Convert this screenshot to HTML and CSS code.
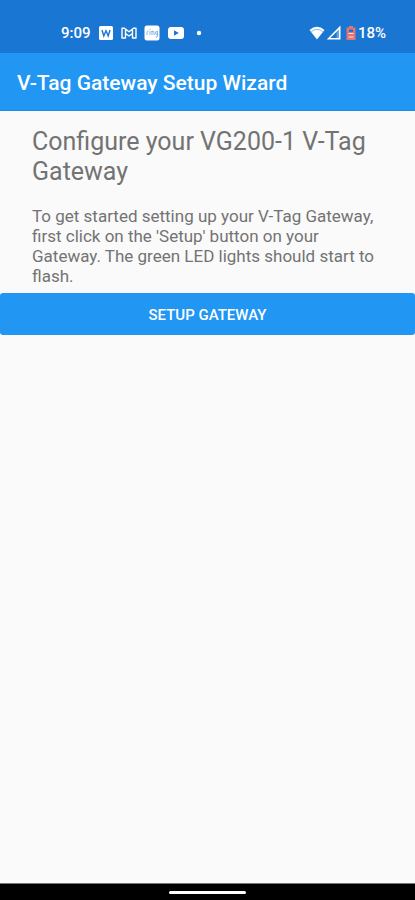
FILE: index.html
```html
<!DOCTYPE html>
<html lang="en">
<head>
<meta charset="utf-8">
<meta name="viewport" content="width=device-width, initial-scale=1">
<title>V-Tag Gateway Setup Wizard</title>
<link rel="stylesheet" href="styles.css">
</head>
<body>
<div class="status">
  <div class="status-group notifications">
    <span class="clock">9:09</span>
    <svg width="16" height="16" viewBox="0 0 16 16" aria-hidden="true"><rect x="1" y="1" width="14" height="14" rx="1.5" fill="#fff"/><path d="M4 5l1.8 6L8 5.8l2.2 5.2L12 5" fill="none" stroke="#1976d2" stroke-width="1.4"/></svg>
    <svg width="16" height="16" viewBox="0 0 16 16" aria-hidden="true"><path d="M1 3.200h2.500L8 6.800l4.500-3.600H15v9.800h-3.500V8.500L8 11 4.500 8.500V13H1zM4.500 4.500v4M11.500 4.500v4" fill="none" stroke="#fff" stroke-width="1.400" stroke-linejoin="round"/></svg>
    <svg width="16" height="16" viewBox="0 0 16 16" aria-hidden="true"><rect x="0.500" y="0.500" width="15" height="15" rx="2.500" fill="#fff"/><path d="M3 10V7q0-1 1.500-1M6 6v4M6 4v1M8 10V6v1q0-1 1-1t1 1v3M13.500 6v5q0 1.500-2 1M13.500 7q-2-1.500-2 1t2 1" fill="none" stroke="#79aee6" stroke-width="0.900"/></svg>
    <svg width="18" height="16" viewBox="0 0 18 16" aria-hidden="true"><rect x="1" y="2" width="16" height="12" rx="3" fill="#fff"/><path d="M7 5.300v5.400L11.800 8z" fill="#1976d2"/></svg>
    <svg class="dot" width="6" height="16" viewBox="0 0 6 16" aria-hidden="true"><circle cx="3" cy="8" r="2.200" fill="#fff"/></svg>
  </div>
  <div class="status-group system">
    <svg width="16" height="16" viewBox="0 0 16 16" aria-hidden="true"><path d="M0.500 5Q8-1.500 15.500 5L8 14.500z" fill="#fff"/><path d="M2.300 6.600Q8 2.300 13.700 6.600" fill="none" stroke="#1976d2" stroke-opacity="0.600" stroke-width="0.800"/></svg>
    <svg width="14" height="16" viewBox="0 0 14 16" aria-hidden="true"><path d="M1.500 13.800L12.700 2.500v11.300z" fill="none" stroke="#fff" stroke-width="1.600"/><path d="M9.500 6l3.200-3.500v11.300H9.500z" fill="#fff" fill-opacity="0.300"/></svg>
    <svg class="battery" width="10" height="16" viewBox="0 0 10 16" aria-hidden="true"><path d="M3 1h4v1.500h2.500V15h-9V2.500H3z" fill="#e57373"/><path d="M3 4.500h4V7H3z" fill="#1976d2"/><path d="M2.500 8.500h5M2.500 12h5" stroke="#fff" stroke-opacity="0.800" stroke-width="1.200"/></svg>
    <span class="percent">18%</span>
  </div>
</div>
<header class="appbar"><h1>V-Tag Gateway Setup Wizard</h1></header>
<main>
  <section class="intro">
    <h2>Configure your VG200-1 V-Tag Gateway</h2>
    <p>To get started setting up your V-Tag Gateway, first click on the 'Setup' button on your Gateway. The green LED lights should start to flash.</p>
  </section>
  <button class="setup" type="button">SETUP GATEWAY</button>
</main>
<footer class="navbar"><div class="handle"></div></footer>
</body>
</html>
```
FILE: styles.css
```css
* {
  box-sizing: border-box;
}

body {
  margin: 0;
  min-height: 100vh;
  display: flex;
  flex-direction: column;
  background: #fafafa;
  color: #737373;
  font-family: Roboto, sans-serif;
}

h1, h2, p {
  margin: 0;
}

.status {
  display: flex;
  justify-content: space-between;
  padding: 25px 29px 12px 61px;
  background: #1976d2;
  color: #fff;
  font-size: 15px;
  font-weight: 500;
  line-height: 16px;
}

.status-group {
  display: flex;
  align-items: center;
}

.notifications {
  gap: 7px;
}

.dot {
  margin-left: 4px;
}

.system {
  gap: 2px;
}

.battery {
  margin-left: 3px;
}

.appbar {
  padding: 18px 17px 14px;
  background: #2196f3;
  border-bottom: 1px solid #1c8ce6;
  color: #fff;
}

.appbar h1 {
  font-size: 21px;
  font-weight: 500;
  line-height: 25px;
}

main {
  flex: 1;
}

.intro {
  padding: 16px 32px 7px;
}

.intro h2 {
  font-size: 25px;
  font-weight: 400;
  line-height: 30px;
}

.intro p {
  margin-top: 19px;
  font-size: 17px;
  line-height: 20px;
}

.setup {
  display: block;
  width: 100%;
  padding: 12px 16px 10px;
  border: 0;
  border-radius: 3px;
  background: #2196f3;
  color: #fff;
  font: 500 15px/20px Roboto, sans-serif;
}

.navbar {
  display: flex;
  justify-content: center;
  padding: 7px 0 6px;
  background: #000;
  border-top: 1px solid #777;
}

.handle {
  width: 77px;
  height: 3px;
  border-radius: 2px;
  background: #fff;
}
```
